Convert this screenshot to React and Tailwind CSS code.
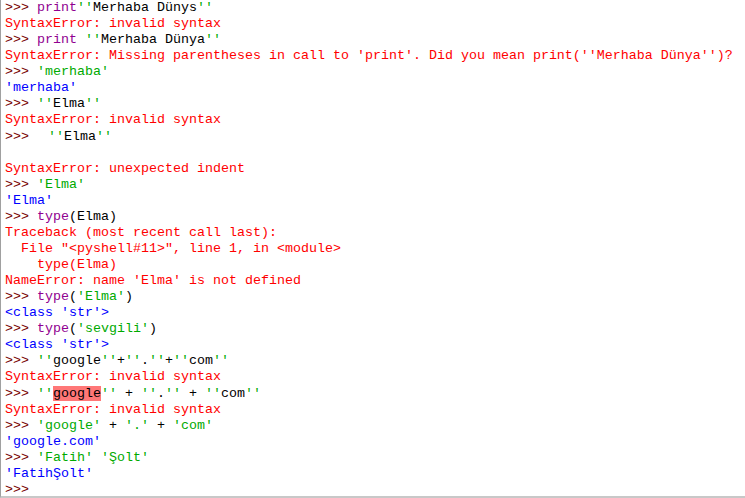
import React from 'react';

const P = 'text-[#770000]';
const K = 'text-[#900090]';
const S = 'text-[#00aa00]';
const O = 'text-[#0000ff]';
const E = 'text-[#ff0000]';
const N = 'text-black';

const lines = [
  [['>>> ', P], ['print', K], ["''", S], ['Merhaba Dünys', N], ["''", S]],
  [['SyntaxError: invalid syntax', E]],
  [['>>> ', P], ['print', K], [' ', N], ["''", S], ['Merhaba Dünya', N], ["''", S]],
  [["SyntaxError: Missing parentheses in call to 'print'. Did you mean print(''Merhaba Dünya'')?", E]],
  [['>>> ', P], ["'merhaba'", S]],
  [["'merhaba'", O]],
  [['>>> ', P], ["''", S], ['Elma', N], ["''", S]],
  [['SyntaxError: invalid syntax', E]],
  [['>>> ', P], ['gap'], ["''", S], ['Elma', N], ["''", S]],
  [],
  [['SyntaxError: unexpected indent', E]],
  [['>>> ', P], ["'Elma'", S]],
  [["'Elma'", O]],
  [['>>> ', P], ['type', K], ['(Elma)', N]],
  [['Traceback (most recent call last):', E]],
  [['  File "<pyshell#11>", line 1, in <module>', E]],
  [['    type(Elma)', E]],
  [["NameError: name 'Elma' is not defined", E]],
  [['>>> ', P], ['type', K], ['(', N], ["'Elma'", S], [')', N]],
  [["<class 'str'>", O]],
  [['>>> ', P], ['type', K], ['(', N], ["'sevgili'", S], [')', N]],
  [["<class 'str'>", O]],
  [['>>> ', P], ["''", S], ['google', N], ["''", S], ['+', N], ["''", S], ['.', N], ["''", S], ['+', N], ["''", S], ['com', N], ["''", S]],
  [['SyntaxError: invalid syntax', E]],
  [['>>> ', P], ["''", S], ['google', 'text-black bg-[#ff7777]'], ["''", S], [' + ', N], ["''", S], ['.', N], ["''", S], [' + ', N], ["''", S], ['com', N], ["''", S]],
  [['SyntaxError: invalid syntax', E]],
  [['>>> ', P], ["'google'", S], [' + ', N], ["'.'", S], [' + ', N], ["'com'", S]],
  [["'google.com'", O]],
  [['>>> ', P], ["'Fatih'", S], [' ', N], ["'Şolt'", S]],
  [["'FatihŞolt'", O]],
  [['>>> ', P]],
];

export default function App() {
  return (
    <div className="w-[745px] h-[498px] bg-white border-l border-[#a0a0a0] border-b-2 border-b-[#c8c8c8] overflow-hidden">
      <div className="pl-[4px] font-['Liberation_Mono',monospace] text-[13.33px] leading-[16.07px]">
        {lines.map((segs, i) => (
          <div key={i} className="h-[16.07px] whitespace-pre">
            {segs.map(([t, c], j) =>
              t === 'gap' ? (
                <span key={j} className="inline-block w-[11px]" />
              ) : (
                <span key={j} className={c}>{t}</span>
              )
            )}
          </div>
        ))}
      </div>
    </div>
  );
}
